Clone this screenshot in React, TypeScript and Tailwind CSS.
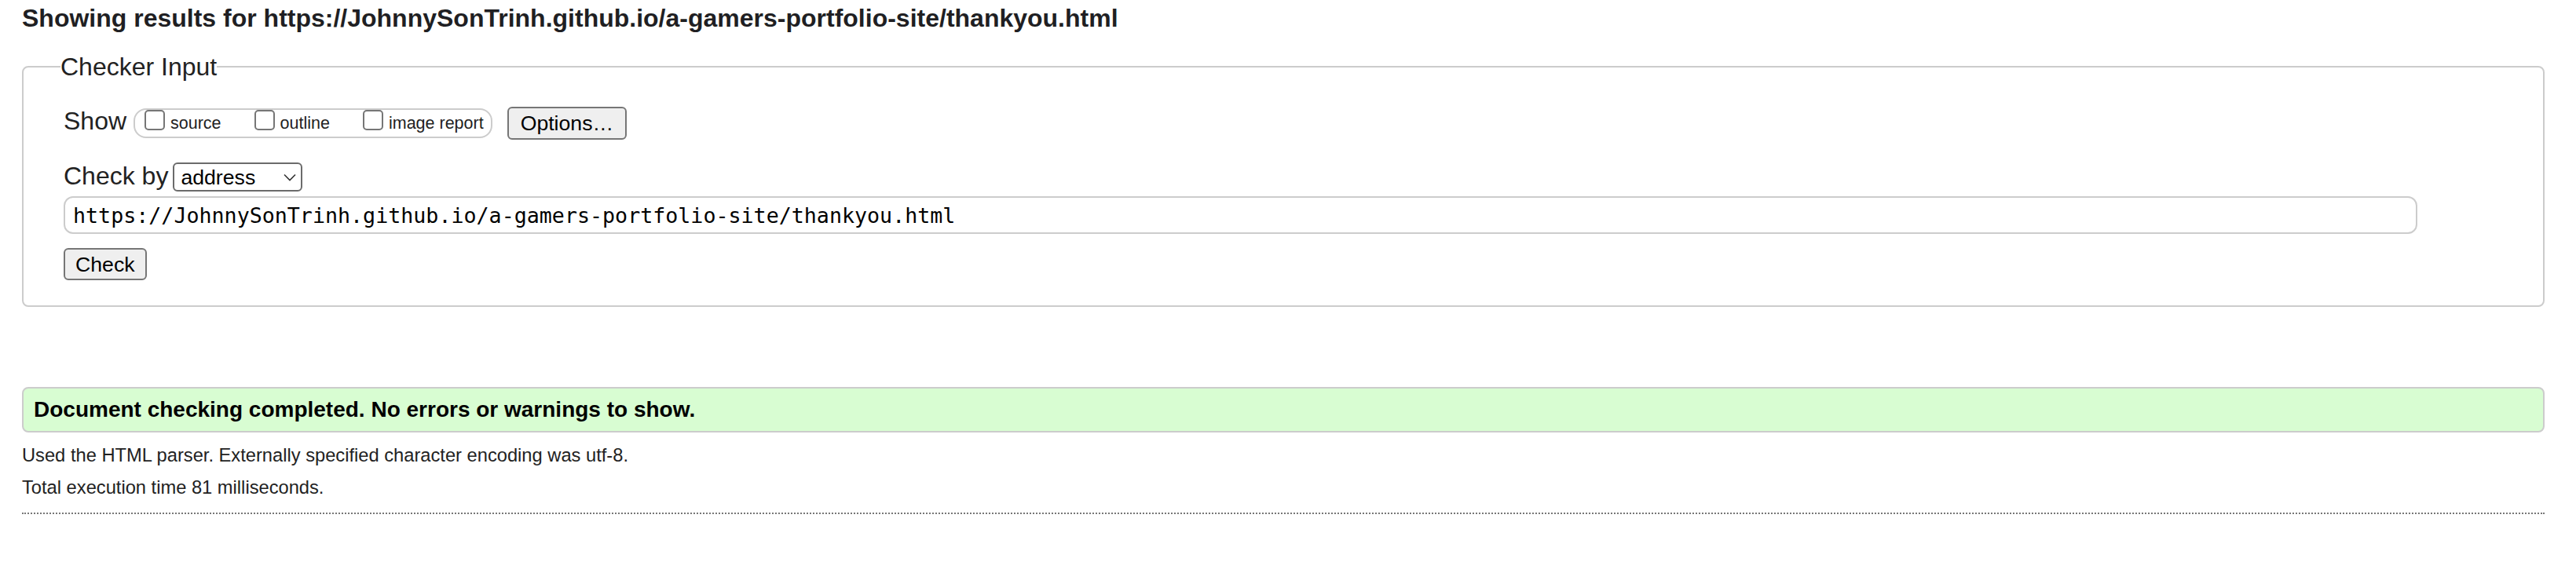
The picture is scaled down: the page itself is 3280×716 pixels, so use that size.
import React from 'react';

const url = 'https://JohnnySonTrinh.github.io/a-gamers-portfolio-site/thankyou.html';

const ShowOption: React.FC<{ label: string; first?: boolean }> = ({ label, first }) => (
  <label className={`flex items-start ${first ? '' : 'ml-[42px]'}`}>
    <input
      type="checkbox"
      className="appearance-none m-0 w-[26px] h-[26px] border-2 border-[#767676] rounded-[5px] bg-white"
    />
    <span className="ml-[7px] mt-[5px] text-[21.5px] leading-[25px] text-[#222]">{label}</span>
  </label>
);

const App: React.FC = () => {
  return (
    <div className="min-h-[716px] bg-white pl-[28px] pr-[40px] font-['Liberation_Sans',Arial,sans-serif] text-[#222]">
      <h2 className="pt-[6px] text-[32px] leading-[34px] font-bold text-[#1f1f23]">
        Showing results for {url}
      </h2>

      {/* Checker input form */}
      <fieldset className="mt-[27px] border-2 border-[#cccccc] rounded-[8px] pl-[51px] pr-[40px] pb-[32px]">
        <legend className="-ml-[4px] text-[32px] leading-[36px] text-[#222]">Checker Input</legend>

        <div className="mt-[33px] flex items-start">
          <span className="text-[32px] leading-[36px]">Show</span>
          <div className="ml-[9px] mt-[2px] h-[38px] flex items-start border-2 border-[#cccccc] rounded-[16px] pl-[12px] pr-[9px]">
            <ShowOption label="source" first />
            <ShowOption label="outline" />
            <ShowOption label="image report" />
          </div>
          <button
            type="button"
            className="ml-[19px] h-[42px] px-[15px] bg-[#efefef] border-2 border-[#767676] rounded-[6px] text-[26.67px] leading-[30px] text-black"
          >
            Options…
          </button>
        </div>

        <div className="mt-[28px] flex items-start">
          <span className="text-[32px] leading-[36px]">Check by</span>
          <div className="ml-[6px] mt-[1px] w-[165px] h-[37px] flex items-center justify-between border-2 border-[#6b6b6b] rounded-[6px] pl-[8px] pr-[6px] text-[26.67px] leading-[30px] text-black">
            <span>address</span>
            <svg width="16" height="10" viewBox="0 0 16 10" fill="none">
              <polyline points="1,1.5 8,8.5 15,1.5" stroke="#333" strokeWidth="1.6" />
            </svg>
          </div>
        </div>

        <input
          type="text"
          readOnly
          value={url}
          className="mt-[6px] block w-[2997px] h-[48px] border-2 border-[#cccccc] rounded-[12px] pl-[10px] font-['DejaVu_Sans_Mono',monospace] text-[26.67px] text-black outline-none"
        />

        <button
          type="button"
          className="mt-[18px] block h-[41px] px-[13px] bg-[#efefef] border-2 border-[#767676] rounded-[6px] text-[26.67px] leading-[30px] text-black"
        >
          Check
        </button>
      </fieldset>

      <div className="mt-[102px] h-[58px] flex items-center border-2 border-[#cccccc] rounded-[8px] bg-[#d8fdd2] pl-[13px]">
        <p className="text-[28px] leading-[32px] font-bold text-black">
          Document checking completed. No errors or warnings to show.
        </p>
      </div>

      <p className="mt-[15px] text-[23.7px] leading-[28px]">
        Used the HTML parser. Externally specified character encoding was utf-8.
      </p>
      <p className="mt-[13px] text-[23.7px] leading-[28px]">Total execution time 81 milliseconds.</p>

      <div className="mt-[18px] border-t-2 border-dotted border-[#777]" />
    </div>
  );
};

export default App;
